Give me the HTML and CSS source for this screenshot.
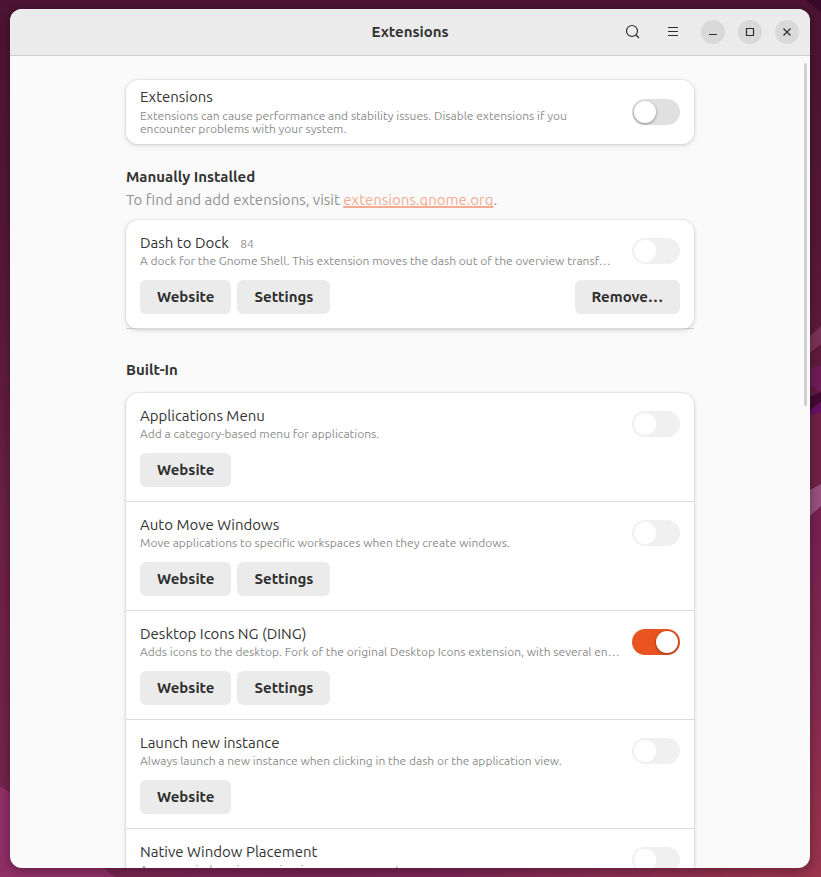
FILE: index.html
```html
<!DOCTYPE html>
<html lang="en">
<head>
<meta charset="utf-8">
<title>Extensions</title>
<link rel="stylesheet" href="styles.css">
</head>
<body>
<svg class="wallpaper" viewBox="0 0 821 877" preserveAspectRatio="none" aria-hidden="true">
  <defs>
    <linearGradient id="base" x1="0" y1="0" x2="0" y2="1">
      <stop offset="0" stop-color="#4c1334"/>
      <stop offset="0.3" stop-color="#571838"/>
      <stop offset="0.6" stop-color="#6b2145"/>
      <stop offset="1" stop-color="#76244e"/>
    </linearGradient>
    <linearGradient id="warm" x1="0" y1="0" x2="0" y2="1">
      <stop offset="0" stop-color="#75204f"/>
      <stop offset="0.35" stop-color="#7d2850"/>
      <stop offset="1" stop-color="#9a344c"/>
    </linearGradient>
    <linearGradient id="floor" x1="0" y1="0" x2="1" y2="0">
      <stop offset="0" stop-color="#73234d"/>
      <stop offset="0.55" stop-color="#7a2552"/>
      <stop offset="1" stop-color="#9a344c"/>
    </linearGradient>
  </defs>
  <rect width="821" height="877" fill="url(#base)"/>
  <rect y="860" width="821" height="17" fill="url(#floor)"/>
  <path d="M806 0H821V12Z" fill="#39092a"/>
  <path d="M810 410L821 408V530H810Z" fill="#6f2148"/>
  <path d="M810 520L821 500V877H810Z" fill="url(#warm)"/>
  <path d="M810 336L821 326V344L810 353Z" fill="#7a3358"/>
  <path d="M810 369L821 365V392L810 385Z" fill="#6f1d58"/>
  <path d="M810 397L821 392V402L810 410Z" fill="#430a33"/>
  <path d="M810 410L821 402V412L810 416Z" fill="#661163"/>
  <path d="M810 490L821 484V506L810 516Z" fill="#96527d"/>
  <path d="M0 786L12 794L115 877H0Z" fill="#8f2f66"/>
</svg>
<div class="window">
  <header class="titlebar">
    <h1 class="window-title">Extensions</h1>
    <div class="controls">
      <button class="tool" aria-label="Search"><svg viewBox="0 0 16 16"><circle cx="7" cy="7" r="5.5"/><path d="M11 11L14 14"/></svg></button>
      <button class="tool" aria-label="Main menu"><svg viewBox="0 0 16 16"><path d="M3 3.5H13M3 7.5H13M3 11.5H13"/></svg></button>
      <button class="round" aria-label="Minimize"><svg viewBox="0 0 16 16"><path d="M4 10.5H12"/></svg></button>
      <button class="round" aria-label="Maximize"><svg viewBox="0 0 16 16"><path d="M4.500 4.500H11.500V11.500H4.500Z"/></svg></button>
      <button class="round" aria-label="Close"><svg viewBox="0 0 16 16"><path d="M4.500 4.500L11.500 11.500M11.500 4.500L4.500 11.500"/></svg></button>
    </div>
  </header>
  <main class="content">
    <div class="column">
      <section class="card">
        <div class="head master">
          <div class="text">
            <label class="name" for="all">Extensions</label>
            <p class="note">Extensions can cause performance and stability issues. Disable extensions if you encounter problems with your system.</p>
          </div>
          <input class="switch" type="checkbox" role="switch" id="all">
        </div>
      </section>

      <h2 class="group-title">Manually Installed</h2>
      <p class="hint">To find and add extensions, visit <a href="#">extensions.gnome.org</a>.</p>
      <ul class="card">
        <li class="row">
          <div class="head">
            <div class="text">
              <label class="name" for="dock">Dash to Dock <span class="version">84</span></label>
              <p class="desc">A dock for the Gnome Shell. This extension moves the dash out of the overview transf…</p>
            </div>
            <input class="switch" type="checkbox" role="switch" id="dock" disabled>
          </div>
          <div class="actions"><button class="btn">Website</button><button class="btn">Settings</button><button class="btn end">Remove…</button></div>
        </li>
      </ul>

      <h2 class="group-title built-in">Built-In</h2>
      <ul class="card">
        <li class="row">
          <div class="head">
            <div class="text">
              <label class="name" for="apps">Applications Menu</label>
              <p class="desc">Add a category-based menu for applications.</p>
            </div>
            <input class="switch" type="checkbox" role="switch" id="apps" disabled>
          </div>
          <div class="actions"><button class="btn">Website</button></div>
        </li>
        <li class="row">
          <div class="head">
            <div class="text">
              <label class="name" for="auto">Auto Move Windows</label>
              <p class="desc">Move applications to specific workspaces when they create windows.</p>
            </div>
            <input class="switch" type="checkbox" role="switch" id="auto" disabled>
          </div>
          <div class="actions"><button class="btn">Website</button><button class="btn">Settings</button></div>
        </li>
        <li class="row">
          <div class="head">
            <div class="text">
              <label class="name" for="ding">Desktop Icons NG (DING)</label>
              <p class="desc">Adds icons to the desktop. Fork of the original Desktop Icons extension, with several en…</p>
            </div>
            <input class="switch" type="checkbox" role="switch" id="ding" checked>
          </div>
          <div class="actions"><button class="btn">Website</button><button class="btn">Settings</button></div>
        </li>
        <li class="row">
          <div class="head">
            <div class="text">
              <label class="name" for="launch">Launch new instance</label>
              <p class="desc">Always launch a new instance when clicking in the dash or the application view.</p>
            </div>
            <input class="switch" type="checkbox" role="switch" id="launch" disabled>
          </div>
          <div class="actions"><button class="btn">Website</button></div>
        </li>
        <li class="row">
          <div class="head">
            <div class="text">
              <label class="name" for="native">Native Window Placement</label>
              <p class="desc">Arrange windows in overview in a more compact way.</p>
            </div>
            <input class="switch" type="checkbox" role="switch" id="native" disabled>
          </div>
        </li>
      </ul>
    </div>
    <div class="scrollbar"></div>
  </main>
</div>
</body>
</html>
```
FILE: styles.css
```css
* {
  box-sizing: border-box;
  margin: 0;
}

body {
  height: 100vh;
  padding: 9px 11px 9px 10px;
  overflow: hidden;
  font: 15px/17px "Ubuntu", "Noto Sans", sans-serif;
  color: #333;
}

.wallpaper {
  position: absolute;
  inset: 0;
  z-index: -1;
  width: 100%;
  height: 100%;
}

.window {
  display: flex;
  flex-direction: column;
  height: 100%;
  border-radius: 12px;
  overflow: hidden;
  background: #fafafa;
  box-shadow: 0 2px 8px 2px rgba(0, 0, 0, 0.25);
}

.titlebar {
  display: grid;
  grid-template-columns: 1fr auto 1fr;
  align-items: center;
  flex: none;
  height: 47px;
  border-bottom: 1px solid #cfcfcf;
  background: #ebebeb;
}

.window-title {
  grid-column: 2;
  padding-bottom: 2px;
  font-size: 15px;
  font-weight: 700;
}

.controls {
  display: flex;
  justify-content: flex-end;
  align-items: center;
  gap: 13px;
  padding-right: 11px;
}

.controls button {
  display: grid;
  place-items: center;
  border: 0;
  padding: 0;
  width: 24px;
  height: 24px;
  border-radius: 50%;
  background: none;
}

.controls .tool {
  width: 27px;
}

.controls .tool + .round {
  margin-left: 2px;
}

.controls .round {
  background: #d9d9d9;
}

.controls svg {
  width: 16px;
  height: 16px;
  fill: none;
  stroke: #2e2e2e;
  stroke-width: 1.2;
}

.content {
  position: relative;
  flex: 1;
  min-height: 0;
  overflow: hidden;
}

.column {
  max-width: 568px;
  margin: 0 auto;
  padding-top: 24px;
}

.scrollbar {
  position: absolute;
  top: 7px;
  right: 3px;
  width: 3px;
  height: 343px;
  border-radius: 2px;
  background: #d0d0d0;
}

.card {
  padding: 0;
  list-style: none;
  border-radius: 12px;
  background: #fff;
  box-shadow: 0 0 0 1px rgba(0, 0, 0, 0.04), 0 1px 3px 1px rgba(0, 0, 0, 0.08), 0 2px 6px 2px rgba(0, 0, 0, 0.03);
}

.row {
  padding: 14px;
  border-bottom: 1px solid rgba(0, 0, 0, 0.14);
}

.head {
  display: flex;
  align-items: center;
}

.master {
  padding: 8px 14px 9px;
}

.text {
  flex: 1;
  min-width: 0;
}

.name {
  display: block;
  margin-bottom: 2px;
}

.version {
  margin-left: 8px;
  font-size: 12px;
  line-height: 12px;
  color: #929292;
}

.desc,
.note {
  font-size: 12px;
  color: #8c8c8c;
}

.desc {
  line-height: 15px;
  white-space: nowrap;
}

.note {
  max-width: 480px;
  padding-top: 2px;
  line-height: 13px;
}

.switch {
  appearance: none;
  flex: none;
  display: flex;
  width: 48px;
  height: 26px;
  padding: 2px;
  border-radius: 13px;
  background: #e0e0e0;
}

.switch::before {
  content: "";
  width: 22px;
  height: 22px;
  border-radius: 50%;
  background: #fff;
  box-shadow: 0 1px 3px rgba(0, 0, 0, 0.4);
}

.switch:disabled {
  background: #f0f0f0;
}

.switch:disabled::before {
  box-shadow: none;
}

.switch:checked {
  justify-content: flex-end;
  background: #e95420;
}

.actions {
  display: flex;
  gap: 6px;
  margin-top: 12px;
}

.btn {
  height: 34px;
  padding: 0 17px 2px;
  border: 0;
  border-radius: 6px;
  background: #ebebeb;
  color: #2e2e2e;
  font: inherit;
  font-weight: 700;
}

.end {
  margin-left: auto;
}

.group-title {
  margin-top: 24px;
  font-size: 15px;
  font-weight: 700;
}

.hint {
  margin: 6px 0 12px;
  color: #929292;
}

.hint a {
  color: #f4ab92;
  text-decoration-thickness: 2px;
  text-decoration-skip-ink: none;
}

.built-in {
  margin: 32px 0 15px;
}
```
